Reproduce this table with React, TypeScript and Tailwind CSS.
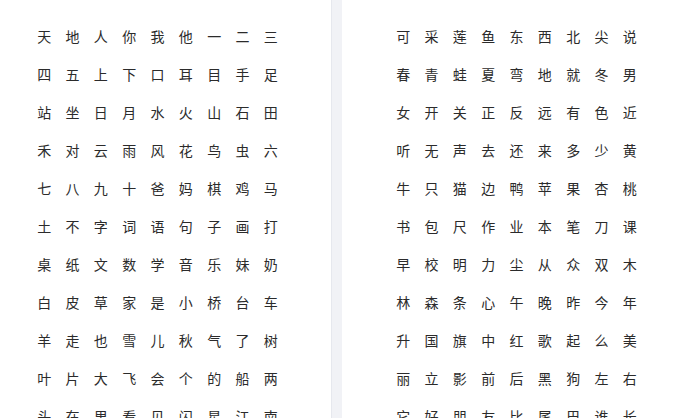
const leftChars =
  '天地人你我他一二三四五上下口耳目手足站坐日月水火山石田禾对云雨风花鸟虫六七八九十爸妈棋鸡马土不字词语句子画打桌纸文数学音乐妹奶白皮草家是小桥台车羊走也雪儿秋气了树叶片大飞会个的船两头在里看见闪星江南'

const rightChars =
  '可采莲鱼东西北尖说春青蛙夏弯地就冬男女开关正反远有色近听无声去还来多少黄牛只猫边鸭苹果杏桃书包尺作业本笔刀课早校明力尘从众双木林森条心午晚昨今年升国旗中红歌起么美丽立影前后黑狗左右它好朋友比尾巴谁长'

// 字表网格：每行 9 个字
function CharGrid({ chars }: { chars: string }) {
  return (
    <div className="grid w-[255px] grid-cols-9">
      {Array.from(chars).map((c, i) => (
        <span key={i} className="h-[38px] text-center leading-[38px]">
          {c}
        </span>
      ))}
    </div>
  )
}

export default function App() {
  return (
    <div
      className="flex h-[418px] w-[686px] overflow-hidden bg-white text-[14px] text-[#2b2b2b]"
      style={{ fontFamily: '"Noto Sans CJK SC", "Microsoft YaHei", sans-serif' }}
    >
      {/* 左侧 */}
      <div className="w-[331px] shrink-0 pl-[30px] pt-[17px]">
        <CharGrid chars={leftChars} />
      </div>

      {/* 分隔条 */}
      <div className="w-[11px] shrink-0 border-l border-[#e6e8ee] bg-[#f1f2f6]" />

      {/* 右侧 */}
      <div className="flex-1 pl-[47px] pt-[17px]">
        <CharGrid chars={rightChars} />
      </div>
    </div>
  )
}
